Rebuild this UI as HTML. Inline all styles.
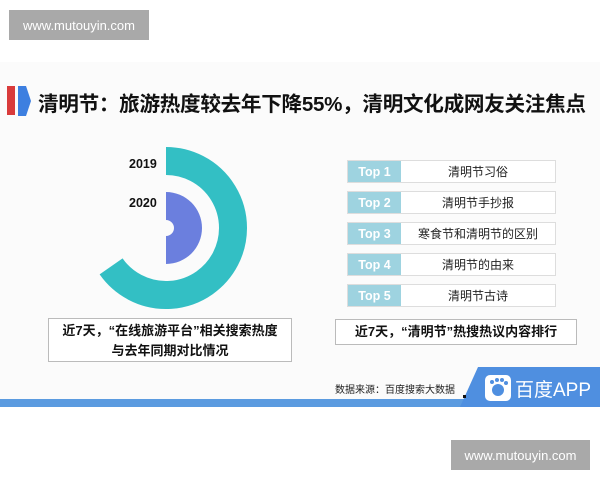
<!DOCTYPE html>
<html><head><meta charset="utf-8"><style>
body{margin:0;width:600px;height:480px;background:#fff;position:relative;overflow:hidden;font-family:"Liberation Sans","Noto Sans CJK SC",sans-serif}
.wm{position:absolute;background:#a9a9a9;color:#fff;font-size:13px;display:flex;align-items:center;justify-content:center}
.slide{position:absolute;left:0;top:62px;width:600px;height:345px;background:#fbfbfb}
.title{position:absolute;left:38px;top:87px;font-size:20.6px;font-weight:bold;color:#111;letter-spacing:-0.3px;white-space:nowrap}
.row{position:absolute;left:347px;width:209px;height:23px;border:1px solid #ddd;background:#fff;box-sizing:border-box}
.row .l{position:absolute;left:0;top:0;width:53px;height:100%;background:#9ed3e0;color:#fff;font-weight:bold;font-size:12.5px;display:flex;align-items:center;justify-content:center}
.row .r{position:absolute;left:53px;right:0;top:0;height:100%;display:flex;align-items:center;justify-content:center;font-size:12px;color:#222}
.box{position:absolute;border:1px solid #bbb;background:#fff;box-sizing:border-box;font-weight:bold;font-size:13px;color:#111;text-align:center}
</style></head><body>
<div class="slide"></div>
<div class="wm" style="left:9px;top:10px;width:140px;height:30px">www.mutouyin.com</div>
<div class="wm" style="left:451px;top:440px;width:139px;height:30px">www.mutouyin.com</div>
<div style="position:absolute;left:7px;top:86px;width:8px;height:29px;background:#d93b3b"></div>
<svg style="position:absolute;left:18px;top:86px" width="14" height="30"><polygon points="0,0 8,0 13,15 8,30 0,30" fill="#3d7fe0"/></svg>
<div class="title">清明节：旅游热度较去年下降55%，清明文化成网友关注焦点</div>
<svg style="position:absolute;left:0;top:0" width="600" height="480">
<path d="M166,161 A67,67 0 1 1 111.1,266.4" fill="none" stroke="#33bfc4" stroke-width="28"/>
<path d="M166,192 A36,36 0 0 1 166,264 L166,236 A8,8 0 0 0 166,220 Z" fill="#6b7fde"/>
<text x="129" y="168" font-size="12.5" font-weight="bold" fill="#111" font-family="Liberation Sans">2019</text>
<text x="129" y="207" font-size="12.5" font-weight="bold" fill="#111" font-family="Liberation Sans">2020</text>
<rect x="0" y="399" width="470" height="8" fill="#5b9be0"/>
<polygon points="478,367 600,367 600,407 460,407" fill="#4f8fe0"/>
<rect x="485" y="375" width="26" height="26" rx="5" fill="#fff"/>
<circle cx="498" cy="390" r="6" fill="#4f8fe0"/>
<circle cx="492" cy="382" r="2" fill="#4f8fe0"/><circle cx="497" cy="380" r="2" fill="#4f8fe0"/><circle cx="502" cy="380" r="2" fill="#4f8fe0"/><circle cx="506" cy="383" r="2" fill="#4f8fe0"/>
<text x="515" y="396" font-size="19" fill="#fff" font-family="Liberation Sans,Noto Sans CJK SC,sans-serif">百度APP</text>
<text x="335" y="393" font-size="10" fill="#222" font-family="Liberation Sans,Noto Sans CJK SC,sans-serif">数据来源：百度搜索大数据</text>
<rect x="463" y="395" width="3" height="3" fill="#111"/>
</svg>
<div class="row" style="top:160px"><div class="l">Top 1</div><div class="r">清明节习俗</div></div>
<div class="row" style="top:191px"><div class="l">Top 2</div><div class="r">清明节手抄报</div></div>
<div class="row" style="top:222px"><div class="l">Top 3</div><div class="r">寒食节和清明节的区别</div></div>
<div class="row" style="top:253px"><div class="l">Top 4</div><div class="r">清明节的由来</div></div>
<div class="row" style="top:284px"><div class="l">Top 5</div><div class="r">清明节古诗</div></div>
<div class="box" style="left:48px;top:318px;width:244px;height:44px;line-height:20px;padding-top:2px">近7天，“在线旅游平台”相关搜索热度<br>与去年同期对比情况</div>
<div class="box" style="left:335px;top:319px;width:242px;height:26px;line-height:24px">近7天，“清明节”热搜热议内容排行</div>
</body></html>
